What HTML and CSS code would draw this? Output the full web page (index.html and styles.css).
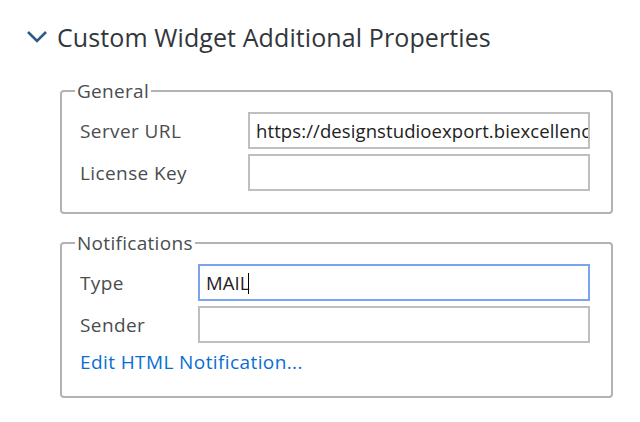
FILE: index.html
```html
<!DOCTYPE html>
<html lang="en">
<head>
    <meta charset="UTF-8">
    <meta name="viewport" content="width=device-width, initial-scale=1.0">
    <title>Custom Widget Additional Properties</title>
    <link rel="stylesheet" href="styles.css">
</head>
<body>

<div class="panel">
    <div class="panel-head">
        <svg class="chevron" width="22" height="14" viewBox="0 0 22 14">
            <path d="M2 2 L11 11 L20 2" fill="none" stroke="#2f5b86" stroke-width="2.6"/>
        </svg>
        <h1>Custom Widget Additional Properties</h1>
    </div>

    <fieldset class="group general">
        <legend>General</legend>
        <div class="row">
            <label>Server URL</label>
            <div class="field">https://designstudioexport.biexcellence.com</div>
        </div>
        <div class="row">
            <label>License Key</label>
            <div class="field"></div>
        </div>
    </fieldset>

    <fieldset class="group notify">
        <legend>Notifications</legend>
        <div class="row">
            <label>Type</label>
            <div class="field focused">MAIL<span class="caret"></span></div>
        </div>
        <div class="row">
            <label>Sender</label>
            <div class="field"></div>
        </div>
        <a class="link" href="#">Edit HTML Notification...</a>
    </fieldset>
</div>

</body>
</html>
```

FILE: styles.css
```css
body {
    margin: 0;
    font-family: "Open Sans", "Noto Sans", Arial, sans-serif;
    background-color: #fff;
    color: #32363a;
}
.panel {
    padding: 18px 28px 0 26px;
}
.panel-head {
    display: flex;
    align-items: center;
    gap: 9px;
    height: 38px;
}
h1 {
    margin: 0;
    font-size: 25px;
    letter-spacing: 0.1px;
    font-weight: normal;
    color: #32363a;
}
.group {
    margin: 0 0 0 34px;
    width: 553px;
    box-sizing: border-box;
    border: 2px solid #b3b3b3;
    border-radius: 4px;
    padding: 10px 21px 16px 18px;
}
.general {
    margin-top: 24px;
}
.notify {
    margin-top: 18px;
    padding-bottom: 22px;
}
legend {
    font-size: 19px;
    letter-spacing: 0.3px;
    line-height: 22px;
    padding: 0 2px;
    margin-left: -5px;
    color: #4a4d50;
}
.row {
    display: grid;
    align-items: center;
    margin-bottom: 5px;
}
.general .row {
    grid-template-columns: 168px 1fr;
}
.notify .row {
    grid-template-columns: 118px 1fr;
}
label {
    font-size: 19px;
    letter-spacing: 0.4px;
    color: #4a4d50;
}
.field {
    height: 37px;
    box-sizing: border-box;
    border: 2px solid #bfbfbf;
    padding: 0 6px;
    font-size: 18.5px;
    letter-spacing: 0.1px;
    line-height: 33px;
    color: #222;
    white-space: nowrap;
    overflow: hidden;
}
.field.focused {
    border-color: #7aa5ee;
}
.caret {
    display: inline-block;
    width: 1px;
    height: 21px;
    background-color: #000;
    vertical-align: -4px;
    margin-left: -2px;
}
.link {
    display: inline-block;
    margin-top: 2px;
    font-size: 19px;
    letter-spacing: 0.4px;
    line-height: 24px;
    color: #0a6ed1;
    text-decoration: none;
}
```
